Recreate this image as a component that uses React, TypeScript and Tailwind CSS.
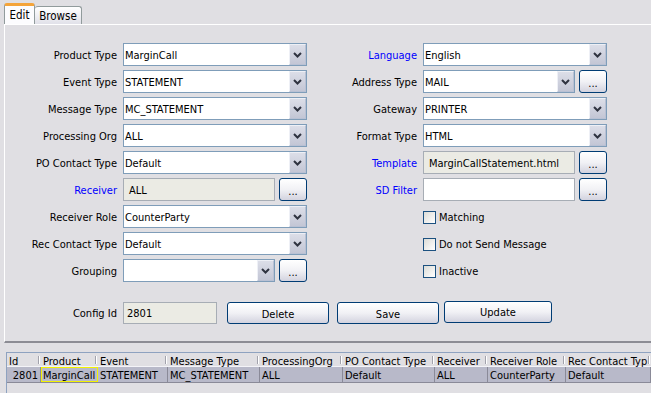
import React from "react";

const Chevron = () => (
  <svg width="9" height="6" viewBox="0 0 9 6" className="block">
    <path d="M1 1L4.5 4.5L8 1" fill="none" stroke="#2f3340" strokeWidth="2" />
  </svg>
);

const btn =
  "rounded-[3px] border border-[#003c74] bg-linear-to-b from-white via-[#f1f1f5] to-[#d3d3df] flex items-center justify-center";

function Combo({ value, short }: { value: string; short?: boolean }) {
  return (
    <div
      className={`${short ? "w-[152px]" : "w-[184px]"} h-[23px] flex border border-[#7f9db9] bg-white`}
    >
      <div className="flex-1 flex items-center pl-[1px] pt-[1px] overflow-hidden whitespace-nowrap">
        {value}
      </div>
      <div className="w-[17px] h-full border border-[#b9c1d4] border-l-[#eef0f6] border-t-[#eef0f6] bg-linear-to-b from-[#dcdee8] to-[#c3c6d5] flex items-center justify-center">
        <Chevron />
      </div>
    </div>
  );
}

function Dots() {
  return <div className={`${btn} w-[28px] h-[23px] pt-[3px]`}>...</div>;
}

function Disabled({ value }: { value: string }) {
  return (
    <div className="w-[152px] h-[23px] border border-[#a7adb5] bg-[#ebebe4] flex items-center pl-[5px] pt-[1px] whitespace-nowrap overflow-hidden">
      {value}
    </div>
  );
}

function Label({ text, blue }: { text: string; blue?: boolean }) {
  return (
    <div
      className={`h-[23px] flex items-center justify-end pr-[6px] pt-[1px] whitespace-nowrap ${blue ? "text-[#0000ff]" : "text-black"}`}
    >
      {text}
    </div>
  );
}

function Check({ text }: { text: string }) {
  return (
    <div className="h-[23px] flex items-center gap-[3px] pt-[2px] whitespace-nowrap">
      <div className="w-[13px] h-[13px] border border-[#1c5180] bg-linear-to-br from-[#dcdcd7] to-white" />
      <span>{text}</span>
    </div>
  );
}

const cols = [
  { h: "Id", w: "w-[34px]", v: "2801", right: true },
  { h: "Product", w: "w-[57px]", v: "MarginCall", focus: true },
  { h: "Event", w: "w-[70px]", v: "STATEMENT" },
  { h: "Message Type", w: "w-[92px]", v: "MC_STATEMENT" },
  { h: "ProcessingOrg", w: "w-[83px]", v: "ALL" },
  { h: "PO Contact Type", w: "w-[92px]", v: "Default" },
  { h: "Receiver", w: "w-[53px]", v: "ALL" },
  { h: "Receiver Role", w: "w-[78px]", v: "CounterParty" },
  { h: "Rec Contact Typ", w: "w-[85px]", v: "Default" },
];

export default function App() {
  return (
    <div className="w-[651px] h-[393px] overflow-hidden bg-[#e0dfe3] text-[11px] leading-none text-black font-['DejaVu_Sans_Condensed','Liberation_Sans',Arial,sans-serif] flex flex-col">
      {/* Tabs */}
      <div className="h-[24px] shrink-0 flex items-end pl-[4px]">
        <div className="w-[31px] h-[21px] rounded-t-[3px] border-x border-[#919b9c] border-t-[3px] border-t-[#f4a43a] bg-[#fcfcfe] flex items-center justify-center pt-[1px] text-[11.5px]">
          Edit
        </div>
        <div className="w-[47px] h-[18px] rounded-t-[3px] border-r border-t border-[#919b9c] bg-linear-to-b from-white to-[#e1e1e9] flex items-center justify-center pt-[2px] text-[11.5px]">
          Browse
        </div>
      </div>

      {/* Panel */}
      <div className="ml-[4px] h-[319px] shrink-0 border-l border-t border-white border-b-2 border-b-[#8c8c94] pt-[18px]">
        <div className="grid grid-cols-[118px_184px_116px_184px] gap-y-[4px]">
          <Label text="Product Type" />
          <Combo value="MarginCall" />
          <Label text="Language" blue />
          <Combo value="English" />

          <Label text="Event Type" />
          <Combo value="STATEMENT" />
          <Label text="Address Type" />
          <div className="flex gap-[4px]">
            <Combo value="MAIL" short />
            <Dots />
          </div>

          <Label text="Message Type" />
          <Combo value="MC_STATEMENT" />
          <Label text="Gateway" />
          <Combo value="PRINTER" />

          <Label text="Processing Org" />
          <Combo value="ALL" />
          <Label text="Format Type" />
          <Combo value="HTML" />

          <Label text="PO Contact Type" />
          <Combo value="Default" />
          <Label text="Template" blue />
          <div className="flex gap-[4px]">
            <Disabled value="MarginCallStatement.html" />
            <Dots />
          </div>

          <Label text="Receiver" blue />
          <div className="flex gap-[4px]">
            <Disabled value="ALL" />
            <Dots />
          </div>
          <Label text="SD Filter" blue />
          <div className="flex gap-[4px]">
            <div className="w-[152px] h-[23px] border border-[#a7adb5] bg-white" />
            <Dots />
          </div>

          <Label text="Receiver Role" />
          <Combo value="CounterParty" />
          <div />
          <Check text="Matching" />

          <Label text="Rec Contact Type" />
          <Combo value="Default" />
          <div />
          <Check text="Do not Send Message" />

          <Label text="Grouping" />
          <div className="flex gap-[4px]">
            <Combo value="" short />
            <Dots />
          </div>
          <div />
          <Check text="Inactive" />
        </div>

        {/* Config row */}
        <div className="mt-[20px] flex items-center h-[22px]">
          <div className="w-[118px] flex justify-end pr-[6px] pt-[1px]">Config Id</div>
          <div className="w-[94px] h-[22px] border border-[#a7adb5] bg-[#ebebe4] flex items-center pl-[3px] pt-[1px]">
            2801
          </div>
          <div className={`${btn} ml-[10px] w-[102px] h-[22px] pt-[2px]`}>Delete</div>
          <div className={`${btn} ml-[8px] w-[102px] h-[22px] pt-[2px]`}>Save</div>
          <div className={`${btn} ml-[5px] w-[108px] h-[22px] -mt-[2px] pt-[1px]`}>Update</div>
        </div>
      </div>

      {/* Table */}
      <div className="ml-[6px] mt-[9px] flex-1 border-t border-l border-[#8ea2c0] overflow-hidden">
        <div className="flex h-[14px] border-b border-[#f4f4f8] whitespace-nowrap">
          {cols.map((c) => (
            <div key={c.h} className={`${c.w} shrink-0 flex items-start`}>
              <span className="flex-1 pl-[2px] pt-[3px] overflow-hidden">{c.h}</span>
              <span className="w-[2px] h-[8px] mt-[3px] mr-[1px] border-l border-[#a2a2ac] border-r border-r-white" />
            </div>
          ))}
        </div>
        <div className="flex h-[16px] bg-[#b8b9c9] border-b border-[#8a8a98] whitespace-nowrap">
          {cols.map((c) =>
            c.focus ? (
              <div
                key={c.h}
                className={`${c.w} shrink-0 h-full flex items-center pt-[1px] pl-[1px] overflow-hidden border border-[#f2f200]`}
              >
                {c.v}
              </div>
            ) : (
              <div
                key={c.h}
                className={`${c.w} shrink-0 h-full flex items-center pt-[1px] overflow-hidden border-r border-r-[#8a8a98] ${
                  c.right ? "justify-end pr-[2px]" : "pl-[2px]"
                }`}
              >
                {c.v}
              </div>
            )
          )}
        </div>
      </div>
    </div>
  );
}
